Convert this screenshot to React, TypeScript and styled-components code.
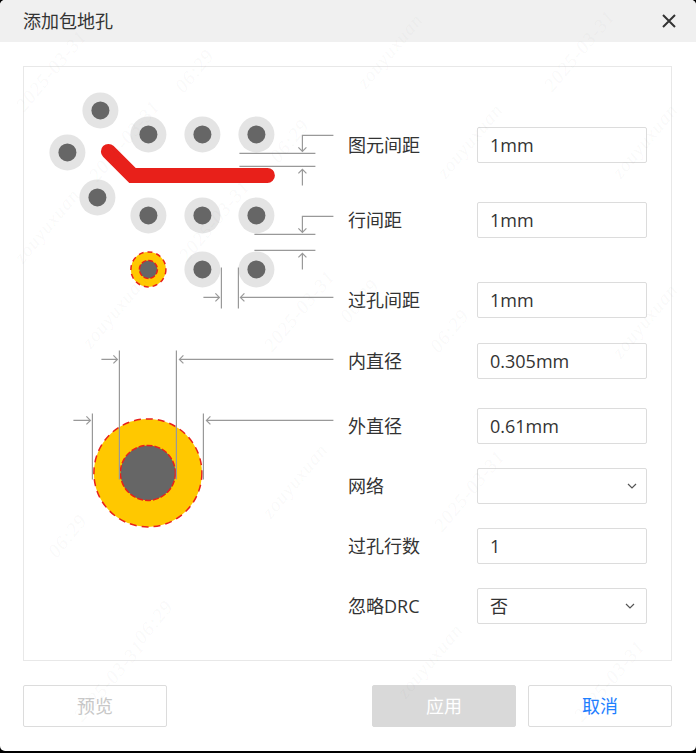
import React from "react";
import styled, { createGlobalStyle } from "styled-components";

const GlobalStyle = createGlobalStyle`
  html, body {
    margin: 0;
    padding: 0;
    background: #000000;
  }
`;

const Dialog = styled.div`
  position: relative;
  width: 696px;
  height: 751px;
  box-sizing: border-box;
  background: #ffffff;
  border-radius: 5px;
  overflow: hidden;
  font-family: "Open Sans", "Noto Sans CJK SC", sans-serif;
  font-size: 18px;
  color: #333333;
`;

const Header = styled.div`
  height: 42px;
  box-sizing: border-box;
  background: #f0f0f0;
  padding: 0 19px 0 23px;
  display: flex;
  align-items: center;
  justify-content: space-between;
`;

const Title = styled.span`
  line-height: 42px;
`;

const CloseIcon = styled.svg`
  width: 16px;
  height: 16px;
  display: block;
`;

const Body = styled.div`
  padding: 24px 24px 0 23px;
`;

const Panel = styled.div`
  box-sizing: border-box;
  width: 649px;
  height: 595px;
  border: 1px solid #e8e8e8;
  display: flex;
`;

const Diagram = styled.svg`
  width: 324px;
  height: 593px;
  flex: none;
  display: block;
`;

const Form = styled.div`
  display: flex;
  flex-direction: column;
`;

const Row = styled.div<{ $top: number }>`
  display: flex;
  align-items: center;
  height: 36px;
  margin-top: ${(p) => p.$top}px;
`;

const Label = styled.label`
  width: 129px;
  flex: none;
  padding-bottom: 3px;
`;

const Field = styled.div`
  box-sizing: border-box;
  width: 170px;
  height: 36px;
  padding: 0 11px 0 12px;
  border: 1px solid #dcdcdc;
  border-radius: 2px;
  background: #ffffff;
  display: flex;
  align-items: center;
  justify-content: space-between;
  line-height: 34px;
`;

const Chevron = styled.svg<{ $nudge: number }>`
  width: 10px;
  height: 6px;
  display: block;
  margin-right: ${(p) => -p.$nudge}px;
`;

const Footer = styled.div`
  display: flex;
  gap: 12px;
  padding: 24px 24px 0 23px;
`;

const Button = styled.button<{ $variant: "ghost" | "muted" | "link" }>`
  box-sizing: border-box;
  width: 144px;
  height: 42px;
  padding: 0 0 2px;
  border-radius: 2px;
  font: inherit;
  border: 1px solid ${(p) => (p.$variant === "muted" ? "#d9d9d9" : "#dcdcdc")};
  background: ${(p) => (p.$variant === "muted" ? "#d9d9d9" : "#ffffff")};
  color: ${(p) =>
    p.$variant === "muted" ? "#ffffff" : p.$variant === "link" ? "#1e80ff" : "#c8c8c8"};
  &:first-child {
    margin-right: auto;
  }
`;

const Watermarks = styled.div`
  position: absolute;
  inset: 0;
  pointer-events: none;
  overflow: hidden;
`;

const Mark = styled.span<{ $x: number; $y: number }>`
  position: absolute;
  left: ${(p) => p.$x}px;
  top: ${(p) => p.$y}px;
  transform: rotate(-50deg);
  font-family: "Liberation Serif", serif;
  font-style: italic;
  font-size: 19px;
  letter-spacing: 1px;
  white-space: nowrap;
  color: rgba(120, 120, 120, 0.05);
`;

const marks: [string, number, number][] = [
  ["2025-03-31", 2, 60],
  ["06:29", 170, 60],
  ["zouyuxuan", 345, 40],
  ["2025-03-31", 530, 40],
  ["2025-03-31", 75, 130],
  ["06:29", 265, 130],
  ["zouyuxuan", 2, 215],
  ["2025-03-31", 165, 210],
  ["06:29", 335, 290],
  ["zouyuxuan", 425, 130],
  ["zouyuxuan", 70, 300],
  ["2025-03-31", 250, 300],
  ["zouyuxuan", 600, 130],
  ["06:29", 425, 320],
  ["zouyuxuan", 250, 470],
  ["2025-03-31", 420, 480],
  ["06:29", 43, 525],
  ["zouyuxuan", 600, 310],
  ["2025-03-31", 60, 670],
  ["06:29", 129, 611],
  ["zouyuxuan", 385, 650],
  ["2025-03-31", 560, 670],
];

const pads: [number, number][] = [
  [100, 110],
  [148, 134],
  [202, 134],
  [256, 134],
  [67, 152],
  [97, 197],
  [148, 215],
  [202, 215],
  [256, 215],
  [202, 269],
  [256, 269],
];

const dims: string[] = [
  "M333 135H302V151M298 147L302 151L306 147",
  "M239 153H315M239 166H315",
  "M302 185V169M298 173L302 169L306 173",
  "M333 216H302V232M298 228L302 232L306 228",
  "M254 234H315M254 250H315",
  "M302 269V253M298 257L302 253L306 257",
  "M221 267V308M238 267V308",
  "M203 297H219M215 293L219 297L215 301",
  "M333 297H240M244 293L240 297L244 301",
  "M119 350V479M176 350V479",
  "M101 359H117M113 355L117 359L113 363",
  "M333 359H179M183 355L179 359L183 363",
  "M92 413V479M203 413V479",
  "M73 420H90M86 416L90 420L86 424",
  "M333 420H206M210 416L206 420L210 424",
];

const rows: { label: string; value: string; top: number; nudge?: number }[] = [
  { label: "图元间距", value: "1mm", top: 60 },
  { label: "行间距", value: "1mm", top: 39 },
  { label: "过孔间距", value: "1mm", top: 44 },
  { label: "内直径", value: "0.305mm", top: 25 },
  { label: "外直径", value: "0.61mm", top: 29 },
  { label: "网络", value: "", top: 24, nudge: 2 },
  { label: "过孔行数", value: "1", top: 24 },
  { label: "忽略DRC", value: "否", top: 24, nudge: 0 },
];

export default function App() {
  return (
    <>
      <GlobalStyle />
      <Dialog>
        <Header>
          <Title>添加包地孔</Title>
          <CloseIcon viewBox="0 0 16 16">
            <path d="M2 2L14 14M14 2L2 14" stroke="#333333" strokeWidth="2" fill="none" />
          </CloseIcon>
        </Header>
        <Body>
          <Panel>
            <Diagram viewBox="23.6 66.6 324 593">
              {pads.map(([x, y]) => (
                <g key={`${x}-${y}`}>
                  <circle cx={x} cy={y} r="18" fill="#e4e4e4" />
                  <circle cx={x} cy={y} r="9" fill="#666666" />
                </g>
              ))}
              <circle cx="148" cy="269" r="17.5" fill="#ffc800" stroke="#e8201a" strokeWidth="1.5" strokeDasharray="5 4" />
              <circle cx="148" cy="269" r="9" fill="#666666" stroke="#e8201a" strokeWidth="1.5" strokeDasharray="5 2" />
              <path d="M108 151L132 175H267" fill="none" stroke="#e8201a" strokeWidth="15" strokeLinecap="round" />
              <circle cx="147.5" cy="472.5" r="54" fill="#ffc800" stroke="#e8201a" strokeWidth="1.5" strokeDasharray="7 5" />
              <circle cx="147.5" cy="472.5" r="27.5" fill="#666666" stroke="#e8201a" strokeWidth="1.5" strokeDasharray="6 2" />
              {dims.map((d) => (
                <path key={d} d={d} fill="none" stroke="#999999" strokeWidth="1.2" />
              ))}
            </Diagram>
            <Form>
              {rows.map((r) => (
                <Row key={r.label} $top={r.top}>
                  <Label>{r.label}</Label>
                  <Field>
                    <span>{r.value}</span>
                    {r.nudge !== undefined && (
                      <Chevron $nudge={r.nudge} viewBox="0 0 10 6">
                        <path d="M1 1L5 5L9 1" fill="none" stroke="#555555" strokeWidth="1.2" />
                      </Chevron>
                    )}
                  </Field>
                </Row>
              ))}
            </Form>
          </Panel>
        </Body>
        <Footer>
          <Button $variant="ghost">预览</Button>
          <Button $variant="muted">应用</Button>
          <Button $variant="link">取消</Button>
        </Footer>
        <Watermarks>
          {marks.map(([text, x, y]) => (
            <Mark key={`${text}-${x}-${y}`} $x={x} $y={y}>
              {text}
            </Mark>
          ))}
        </Watermarks>
      </Dialog>
    </>
  );
}
